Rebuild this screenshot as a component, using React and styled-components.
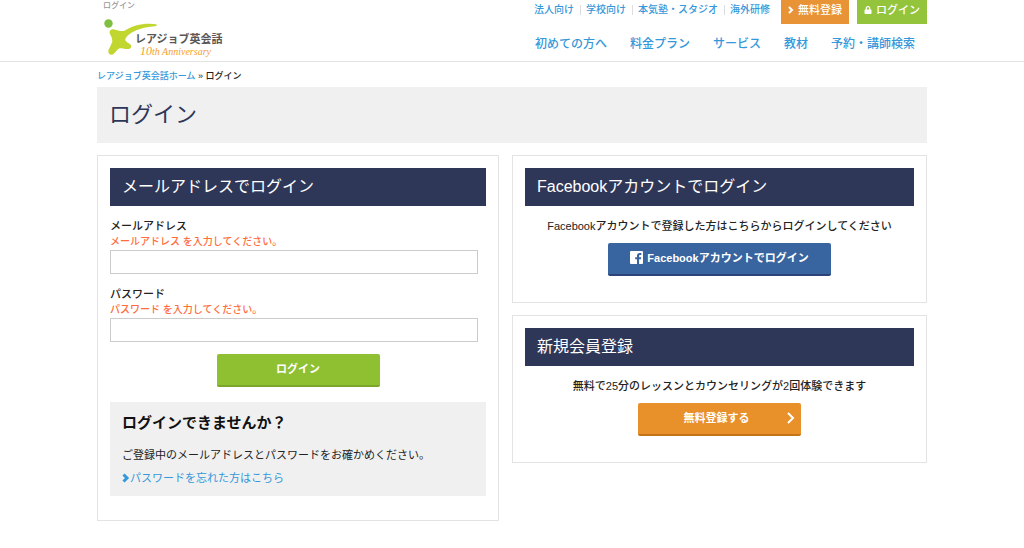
import React, { useState } from 'react'
import styled, { createGlobalStyle } from 'styled-components'
import { FaLock } from 'react-icons/fa'

const GlobalStyle = createGlobalStyle`
  * {
    box-sizing: border-box;
  }
  body {
    margin: 0;
    background: #fff;
    color: #222;
    font-family: "Liberation Sans", "Noto Sans CJK JP", sans-serif;
    font-size: 11px;
    font-weight: 500;
    line-height: 16px;
  }
  h1, h2, h3, p {
    margin: 0;
  }
  a {
    color: #3498db;
    text-decoration: none;
  }
`

const Container = styled.div`
  max-width: 830px;
  margin: 0 auto;
`

const Header = styled.header`
  border-bottom: 1px solid #e3e3e3;
`

const HeaderInner = styled(Container)`
  display: flex;
  justify-content: space-between;
  height: 61px;
`

const Brand = styled.div`
  padding-left: 6px;
`

const Tagline = styled.p`
  color: #999;
  font-size: 8px;
  line-height: 12px;
  height: 18px;
`

const LogoLink = styled.a`
  display: block;

  svg {
    display: block;
  }
`

const Menus = styled.div`
  display: flex;
  flex-direction: column;
  align-items: flex-end;
`

const SubNav = styled.nav`
  display: flex;
  line-height: 20px;
  font-size: 10px;
`

const SubLink = styled.a`
  padding: 0 6px;

  & + & {
    background: linear-gradient(#ddd, #ddd) 0 5px / 1px 10px no-repeat;
  }
`

const HeaderButton = styled.a`
  display: flex;
  align-items: center;
  gap: 4px;
  height: 24px;
  margin-left: 8px;
  padding: 0 7px 4px 7px;
  background: ${(p) => p.$bg};
  color: #fff;
  font-size: 11px;

  ${SubLink} + & {
    margin-left: 5px;
  }
`

const MainNav = styled.nav`
  display: flex;
  gap: 23px;
  padding: 10px 12px 0 0;
  font-size: 12px;
  line-height: 20px;
`

const Breadcrumb = styled.nav`
  padding-top: 6px;
  font-size: 9px;
  height: 25px;
`

const PageTitle = styled.h1`
  padding: 12px;
  background: #f0f0f0;
  color: #2f3759;
  font-size: 22px;
  font-weight: 400;
  line-height: 32px;
`

const Columns = styled.main`
  display: grid;
  grid-template-columns: 402fr 415fr;
  gap: 13px;
  margin-top: 12px;
`

const Side = styled.div`
  display: flex;
  flex-direction: column;
  gap: 12px;
`

const Panel = styled.section`
  padding: 12px 12px ${(p) => p.$bottom || 26}px;
  border: 1px solid #e3e3e3;
`

const PanelTitle = styled.h2`
  padding: 0 12px;
  background: #2f3759;
  color: #fff;
  font-size: 16px;
  font-weight: 400;
  line-height: 38px;
`

const Field = styled.div`
  margin: 12px 0;
  padding-right: 8px;
`

const Label = styled.label`
  display: block;
`

const ErrorText = styled.p`
  color: #ff6c3c;
  font-size: 10px;
`

const Input = styled.input`
  display: block;
  width: 100%;
  height: 24px;
  padding: 0 6px;
  border: 1px solid #ccc;
  background: #fff;
  font: inherit;
`

const Button = styled.button`
  display: flex;
  align-items: center;
  justify-content: center;
  gap: 4px;
  width: ${(p) => p.$width}px;
  height: 33px;
  margin: 0 auto;
  padding: 0 0 2px;
  border: 0;
  border-bottom: 2px solid ${(p) => p.$edge};
  border-radius: 2px;
  background: ${(p) => p.$bg};
  color: #fff;
  font: inherit;
  font-weight: 700;
  cursor: pointer;
`

const RegisterButton = styled(Button)`
  display: grid;
  grid-template-columns: 8px 1fr 8px;
  padding: 0 6px 2px 0;

  span {
    grid-column: 2;
  }
`

const Help = styled.div`
  margin-top: 15px;
  padding: 11px 12px 10px;
  background: #f0f0f0;
`

const HelpTitle = styled.h3`
  margin-bottom: 14px;
  color: #111;
  font-size: 15px;
  line-height: 20px;
`

const HelpText = styled.p`
  font-weight: 400;
`

const HelpLink = styled.a`
  display: flex;
  align-items: center;
  margin-top: 7px;
  font-weight: 400;
`

const Lead = styled.p`
  padding: 12px 0 9px;
  text-align: center;
`

const Chevron = ({ width, height, stroke }) => (
  <svg width={width} height={height} viewBox={`0 0 ${width} ${height}`} aria-hidden="true">
    <path
      d={`M${stroke / 2} ${stroke / 2}L${width - stroke} ${height / 2}L${stroke / 2} ${height - stroke / 2}`}
      fill="none"
      stroke="currentColor"
      strokeWidth={stroke}
    />
  </svg>
)

const Logo = () => (
  <svg width="120" height="40" viewBox="0 0 120 40" role="img" aria-label="レアジョブ英会話">
    <circle cx="5.500" cy="5.500" r="4.200" fill="#7fbf42" />
    <path
      d="M53.500 6.200C42 4.500 30 6.800 21.500 12.800C18 13.500 15 12.700 11.500 11.500C7.500 10.500 5.500 13.500 7.200 16.500C8.500 19 9.600 21 9.200 24C8 27.500 5.800 30.500 5.300 33C5 36.500 8.500 38 10.800 35.800C12.800 33.800 14.200 31.500 16.500 30.300C19.500 30 22.500 31.300 25.500 31C28.500 30.500 29 28 27.200 26.300C25.500 25 23 24 22.200 22C23.500 17 31 10 53.500 8Z"
      fill="#c1d730"
    />
    <text x="32" y="25" fontSize="11" fontWeight="700" fill="#595757">レアジョブ英会話</text>
    <text x="37" y="37" fontSize="10" fontStyle="italic" fontFamily="Liberation Serif, serif" fill="#f5a02c">
      <tspan fontSize="12">10</tspan>th Anniversary
    </text>
  </svg>
)

const FacebookMark = () => (
  <svg width="13" height="13" viewBox="0 0 13 13" aria-hidden="true">
    <rect width="13" height="13" rx="1" fill="#fff" />
    <path d="M7 13V8.200H5.200V6.200H7V4.700C7 2.900 8 2 9.700 2H11.300V4H10.200C9.400 4 9.100 4.300 9.100 5V6.200H11.200L10.900 8.200H9.100V13Z" fill="#3864a0" />
  </svg>
)

const subLinks = ['法人向け', '学校向け', '本気塾・スタジオ', '海外研修']
const mainLinks = ['初めての方へ', '料金プラン', 'サービス', '教材', '予約・講師検索']

const App = () => {
  const [email, setEmail] = useState('')
  const [password, setPassword] = useState('')

  return (
    <>
      <GlobalStyle />
      <Header>
        <HeaderInner>
          <Brand>
            <Tagline>ログイン</Tagline>
            <LogoLink href="#"><Logo /></LogoLink>
          </Brand>
          <Menus>
            <SubNav>
              {subLinks.map((item) => (
                <SubLink href="#" key={item}>{item}</SubLink>
              ))}
              <HeaderButton href="#" $bg="#e89335">
                <Chevron width={6} height={8} stroke={2} />無料登録
              </HeaderButton>
              <HeaderButton href="#" $bg="#93c43c">
                <FaLock size={8} />ログイン
              </HeaderButton>
            </SubNav>
            <MainNav>
              {mainLinks.map((item) => (
                <a href="#" key={item}>{item}</a>
              ))}
            </MainNav>
          </Menus>
        </HeaderInner>
      </Header>
      <Container>
        <Breadcrumb>
          <a href="#">レアジョブ英会話ホーム</a> » ログイン
        </Breadcrumb>
        <PageTitle>ログイン</PageTitle>
        <Columns>
          <Panel as="form" $bottom={24} onSubmit={(e) => e.preventDefault()}>
            <PanelTitle>メールアドレスでログイン</PanelTitle>
            <Field>
              <Label htmlFor="email">メールアドレス</Label>
              <ErrorText>メールアドレス を入力してください。</ErrorText>
              <Input id="email" type="text" value={email} onChange={(e) => setEmail(e.target.value)} />
            </Field>
            <Field>
              <Label htmlFor="password">パスワード</Label>
              <ErrorText>パスワード を入力してください。</ErrorText>
              <Input id="password" type="password" value={password} onChange={(e) => setPassword(e.target.value)} />
            </Field>
            <Button type="submit" $width={163} $bg="#8ec031" $edge="#7aa62a">ログイン</Button>
            <Help>
              <HelpTitle>ログインできませんか？</HelpTitle>
              <HelpText>ご登録中のメールアドレスとパスワードをお確かめください。</HelpText>
              <HelpLink href="#"><Chevron width={8} height={10} stroke={3} />パスワードを忘れた方はこちら</HelpLink>
            </Help>
          </Panel>
          <Side>
            <Panel>
              <PanelTitle>Facebookアカウントでログイン</PanelTitle>
              <Lead>Facebookアカウントで登録した方はこちらからログインしてください</Lead>
              <Button type="button" $width={223} $bg="#3864a0" $edge="#2c4379">
                <FacebookMark />Facebookアカウントでログイン
              </Button>
            </Panel>
            <Panel>
              <PanelTitle>新規会員登録</PanelTitle>
              <Lead>無料で25分のレッスンとカウンセリングが2回体験できます</Lead>
              <RegisterButton type="button" $width={163} $bg="#e89029" $edge="#c3741a">
                <span>無料登録する</span><Chevron width={8} height={12} stroke={2} />
              </RegisterButton>
            </Panel>
          </Side>
        </Columns>
      </Container>
    </>
  )
}

export default App
